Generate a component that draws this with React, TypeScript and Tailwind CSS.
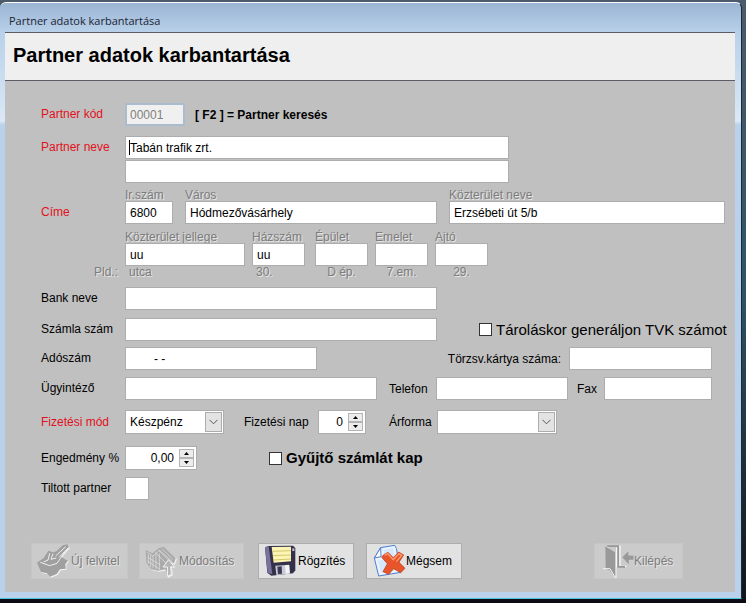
import { useState } from 'react';
import type { ReactNode } from 'react';
import clsx from 'clsx';

const INPUT = 'h-[23px] min-w-0 border border-[#adadad] bg-white px-1 text-xs text-black outline-none';
const HINT = 'text-[#7c7c7c] [text-shadow:1px_1px_0_#e6e6e6]';

export default function App() {
  return (
    <div className="min-h-screen bg-[#0d0b14] font-['Liberation_Sans',Arial,sans-serif] text-xs text-black">
      <div className="bg-linear-to-b from-[#4c5b6b] via-[#2f5266] to-[#12141c] pt-0.5 pr-1">
        <main className="rounded-t-md border-t border-r border-b border-t-white border-r-[#152c3a] border-b-[#4fc3d9] bg-[linear-gradient(#9ab5d3,#b9d1ea_30px,#dbe8f6_118px,#b9d1ea_122px)] pr-1.5 pb-1.5 pl-[5px]">
          <div className="flex h-[29px] items-center pt-2 pl-1 font-['Open_Sans',sans-serif] text-[11px] text-[#1b2433]">
            Partner adatok karbantartása
          </div>
          <header className="flex h-[49px] items-center border-y border-[#5c5c64] bg-[#efefef] pb-1 pl-2">
            <h1 className="text-xl font-bold">Partner adatok karbantartása</h1>
          </header>
          <PartnerForm />
        </main>
      </div>
    </div>
  );
}

function PartnerForm() {
  const [name, setName] = useState('Tabán trafik zrt.');

  return (
    <form className="bg-[#c0c0c0] pt-[22px] pr-2.5 pb-[13px] pl-9" onSubmit={(e) => e.preventDefault()}>
      <div className="flex items-center">
        <Label htmlFor="code" required>Partner kód</Label>
        <input
          id="code"
          disabled
          defaultValue="00001"
          className="h-[23px] w-[60px] border-2 border-[#abbccf] bg-[#f0f0f0] px-[3px] text-xs text-[#808080]"
        />
        <span className="ml-2.5 font-bold">[ F2 ] = Partner keresés</span>
      </div>

      {/* Name, two lines */}
      <div className="mt-2.5 flex items-start">
        <Label htmlFor="name" required>Partner neve</Label>
        <div className="flex w-[384px] flex-col gap-px">
          <div className="relative flex">
            <input id="name" value={name} onChange={(e) => setName(e.target.value)} className={clsx(INPUT, 'flex-1')} />
            <span className="absolute top-1 left-1 h-[15px] w-px bg-black" aria-hidden />
          </div>
          <input aria-label="Partner neve 2" className={INPUT} />
        </div>
      </div>

      {/* Address */}
      <div className="mt-1.5 flex items-end">
        <Label htmlFor="zip" required>Címe</Label>
        <div className="flex flex-1 gap-3">
          <Field id="zip" label="Ir.szám" value="6800" className="w-12" />
          <Field id="city" label="Város" value="Hódmezővásárhely" className="w-[252px]" />
          <Field id="street" label="Közterület neve" value="Erzsébeti út 5/b" className="flex-1" />
        </div>
      </div>
      <div className="mt-[7px] flex items-end">
        <span className={clsx('w-[84px] pr-[7px] text-right leading-3', HINT)}>Pld.:</span>
        <div className="flex gap-[7px]">
          <Field id="kind" label="Közterület jellege" value="uu" hint="utca" className="w-[120px]" />
          <Field id="house" label="Házszám" value="uu" hint="30." className="mr-[3px] w-[53px]" />
          <Field id="building" label="Épület" hint="D ép." centered className="w-[53px]" />
          <Field id="floor" label="Emelet" hint="7.em." centered className="w-[53px]" />
          <Field id="door" label="Ajtó" hint="29." centered className="w-[53px]" />
        </div>
      </div>

      {/* Bank and tax */}
      <div className="mt-[9px] flex items-center">
        <Label htmlFor="bank">Bank neve</Label>
        <input id="bank" className={clsx(INPUT, 'w-[312px]')} />
      </div>
      <div className="mt-2 flex items-center">
        <Label htmlFor="account">Számla szám</Label>
        <input id="account" className={clsx(INPUT, 'w-[312px] shrink-0')} />
        <label className="ml-[42px] flex items-center gap-1 text-[15px] leading-5 whitespace-nowrap">
          <CheckBox />
          Tároláskor generáljon TVK számot
        </label>
      </div>
      <div className="mt-1.5 mr-[13px] flex items-center">
        <Label htmlFor="tax">Adószám</Label>
        <input id="tax" defaultValue="- -" className={clsx(INPUT, 'w-48 pl-7')} />
        <label htmlFor="card" className="ml-auto pr-2">Törzsv.kártya száma:</label>
        <input id="card" className={clsx(INPUT, 'w-[143px]')} />
      </div>
      <div className="mt-[7px] mr-[13px] flex items-center">
        <Label htmlFor="agent">Ügyintéző</Label>
        <input id="agent" className={clsx(INPUT, 'w-[252px]')} />
        <label htmlFor="phone" className="w-[59px] pl-3">Telefon</label>
        <input id="phone" className={clsx(INPUT, 'w-[132px]')} />
        <label htmlFor="fax" className="w-9 pl-[9px]">Fax</label>
        <input id="fax" className={clsx(INPUT, 'flex-1')} />
      </div>

      {/* Payment */}
      <div className="mt-2.5 flex items-center">
        <Label htmlFor="payMode" required>Fizetési mód</Label>
        <Combo id="payMode" options={['Készpénz', 'Átutalás']} className="w-[99px]" />
        <label htmlFor="payDays" className="w-[94px] pl-5">Fizetési nap</label>
        <Spinner id="payDays" value="0" className="w-12" />
        <label htmlFor="priceForm" className="w-[71px] pl-[23px]">Árforma</label>
        <Combo id="priceForm" options={['']} className="w-[120px]" />
      </div>
      <div className="mt-3 flex items-center">
        <Label htmlFor="discount">Engedmény %</Label>
        <Spinner id="discount" value="0,00" className="w-[72px]" />
        <label className="ml-[72px] flex items-center gap-1 text-[15px] leading-5 font-bold">
          <CheckBox />
          Gyűjtő számlát kap
        </label>
      </div>
      <div className="mt-[7px] flex items-center">
        <Label htmlFor="blocked">Tiltott partner</Label>
        <input id="blocked" className={clsx(INPUT, 'w-6')} />
      </div>

      <div className="mt-[43px] mr-[42px] -ml-2.5 flex">
        <ToolButton icon={<NewIcon />} label="Új felvitel" disabled className="w-[97px]" />
        <ToolButton icon={<EditIcon />} label="Módosítás" disabled className="ml-[11px] w-[105px]" />
        <ToolButton icon={<DiskIcon />} label="Rögzítés" className="ml-3.5 w-24" />
        <ToolButton icon={<CancelIcon />} label="Mégsem" className="ml-3 w-24" />
        <ToolButton icon={<ExitIcon />} label="Kilépés" disabled className="ml-auto w-[89px]" />
      </div>
    </form>
  );
}

function Label({ htmlFor, required, children }: { htmlFor: string; required?: boolean; children: ReactNode }) {
  return (
    <label htmlFor={htmlFor} className={clsx('w-[84px] shrink-0 leading-[23px]', required && 'text-[#e01220]')}>
      {children}
    </label>
  );
}

function Field({
  id,
  label,
  value,
  hint,
  centered,
  className,
}: {
  id: string;
  label: string;
  value?: string;
  hint?: string;
  centered?: boolean;
  className: string;
}) {
  return (
    <div className={clsx('flex flex-col', className)}>
      <label htmlFor={id} className={clsx('leading-3 whitespace-nowrap', HINT)}>{label}</label>
      <input id={id} defaultValue={value} className={INPUT} />
      {hint && <span className={clsx('leading-3', HINT, centered ? 'text-center' : 'pl-1')}>{hint}</span>}
    </div>
  );
}

function CheckBox() {
  return (
    <input
      type="checkbox"
      className="size-[13px] appearance-none border border-[#333] bg-white checked:bg-[#333] checked:shadow-[inset_0_0_0_2px_#fff]"
    />
  );
}

function Combo({ id, options, className }: { id: string; options: string[]; className: string }) {
  return (
    <div className={clsx('relative flex', className)}>
      <select id={id} className="h-6 flex-1 appearance-none border border-[#adadad] bg-white pl-1 text-xs outline-none">
        {options.map((o) => (
          <option key={o}>{o}</option>
        ))}
      </select>
      <span className="pointer-events-none absolute top-0.5 right-0.5 flex h-5 w-[17px] items-center justify-center border border-[#adadad] bg-[#e3e3e3]">
        <svg width="9" height="6" viewBox="0 0 9 6" fill="none" stroke="#555">
          <path d="M.5 .8 4.5 4.8 8.5 .8" />
        </svg>
      </span>
    </div>
  );
}

function Spinner({ id, value, className }: { id: string; value: string; className: string }) {
  return (
    <div className={clsx('flex h-6 items-center border border-[#adadad] bg-white pr-0.5', className)}>
      <input id={id} inputMode="decimal" defaultValue={value} className="min-w-0 flex-1 pr-[5px] text-right text-xs outline-none" />
      <div className="flex flex-col">
        <button type="button" aria-label="Növel" className="flex h-[9px] w-[15px] items-center justify-center border border-[#b4b4b4] bg-[#ececec]">
          <svg width="5" height="3" viewBox="0 0 5 3"><path d="M0 3 2.5 0 5 3z" /></svg>
        </button>
        <button type="button" aria-label="Csökkent" className="flex h-[9px] w-[15px] items-center justify-center border border-[#b4b4b4] bg-[#ececec]">
          <svg width="5" height="3" viewBox="0 0 5 3"><path d="M0 0h5L2.5 3z" /></svg>
        </button>
      </div>
    </div>
  );
}

function ToolButton({
  icon,
  label,
  disabled,
  className,
}: {
  icon: ReactNode;
  label: string;
  disabled?: boolean;
  className: string;
}) {
  return (
    <button
      type="button"
      disabled={disabled}
      className={clsx(
        'flex h-9 items-center border pl-[5px] whitespace-nowrap',
        disabled ? 'border-[#c6c6c6] bg-[#cbcbcb]' : 'border-[#adadad] bg-[#e2e2e2]',
        disabled && HINT,
        className,
      )}
    >
      {icon}
      {label}
    </button>
  );
}

/* Icons share a 34px box, drawn on a 102 unit grid */
function Icon({ children }: { children: ReactNode }) {
  return (
    <svg className="size-[34px] shrink-0" viewBox="0 0 102 102" aria-hidden>
      {children}
    </svg>
  );
}

function NewIcon() {
  return (
    <Icon>
      <path d="M3 58 23 44 36 23 52 28 61 24 80 7 94 4 99 12 75 40 96 52 88 62 88 77 72 79 62 93 42 101 33 91 14 87z" fill="#f2f2f2" />
      <path d="M0 56 20 42 34 20 49 25 58 22 77 4 91 1 96 9 72 38 93 50 85 60 86 74 69 76 59 90 39 98 30 88 12 84z" fill="#a0a0a0" />
      <path d="M10 55 38 65 60 58 88 17M38 28 33 48 20 54M48 29 42 46 58 42M56 36 86 8M66 40 93 12" fill="none" stroke="#efefef" strokeWidth="3" />
    </Icon>
  );
}

function EditIcon() {
  return (
    <Icon>
      <path d="M3 20 23 30 44 15 59 10 81 32 96 45 90 62 79 58 84 94 70 101 61 80 41 83 21 79 6 58z" fill="#efefef" />
      <path d="M2 18 22 28 42 12 57 8 78 29 92 43 87 58 77 54 80 91 68 97 61 76 39 80 19 76 4 56z" fill="#aaa" />
      <path d="M6 24 24 36 44 19 82 53M24 36V73M10 30v30M17 34v36M33 30v46M43 29v48M31 25 65 60M40 18 75 52M51 14 84 47M7 39 46 63M7 51 46 77" fill="none" stroke="#e6e6e6" strokeWidth="2" />
      <path d="M54 69 71 47 89 70 77 68 79 91 68 97 67 69z" fill="#b5b5b5" stroke="#f5f5f5" strokeWidth="3" />
    </Icon>
  );
}

function DiskIcon() {
  return (
    <Icon>
      <path d="M3 10 14 6 87 5 94 12V79L87 88 22 95 10 86z" fill="#34304a" />
      <path d="M3 10 14 7 25 91 11 86z" fill="#77739a" />
      <path d="M23 9 81 8 81 52 29 56z" fill="#fbf4b4" />
      <path d="M26 22 80 20M27 35l53-2M28 48l53-3" stroke="#d6c86b" strokeWidth="3" />
      <path d="m34 65 42-3 2 27-41 4z" fill="#c9cad6" />
      <path d="m40 68 13-1 1 22-12 1z" fill="#3a3750" />
      <path d="m63 64 12-1 2 24-12 2z" fill="#f2f3f7" />
      <path d="M85 13h6v8h-6z" fill="#c4c0da" />
    </Icon>
  );
}

function CancelIcon() {
  return (
    <Icon>
      <path d="M26 11 68 4 73 13 86 85 20 96 7 42z" fill="#eaf3ff" stroke="#4c7fcd" strokeWidth="3" strokeLinejoin="round" />
      <path d="M7 42 27 38 26 11z" fill="#fff" stroke="#4c7fcd" strokeWidth="3" strokeLinejoin="round" />
      <path d="M35 17 63 12 75 78 27 87 17 50 35 47z" fill="#d7e8fc" />
      <path d="m34 33 14-8 16 16 16-17 15 9-14 22 18 18-13 13-21-12-15 17-17-8 13-24-17-19z" fill="#e9552a" stroke="#b6300e" strokeWidth="2" strokeLinejoin="round" />
      <path d="m38 34 9-5 17 18 17-18 8 5-16 19" fill="none" stroke="#ff9c70" strokeWidth="4" />
    </Icon>
  );
}

function ExitIcon() {
  return (
    <Icon>
      <path d="M24 7h36v60h20M24 74V10M50 10v60" fill="none" stroke="#f6f6f6" strokeWidth="4" />
      <path d="M20 4h37v62h18v5H52V9H24z" fill="#969696" />
      <path d="M16 7 47 26v76L29 79 10 72h7z" fill="#999" />
      <path d="M48 25v77M9 74h21l17 29" fill="none" stroke="#f6f6f6" strokeWidth="3" />
      <path d="m66 40 20-20v14h15v14H87v14z" fill="#999" stroke="#e5e5e5" strokeWidth="1" />
    </Icon>
  );
}
